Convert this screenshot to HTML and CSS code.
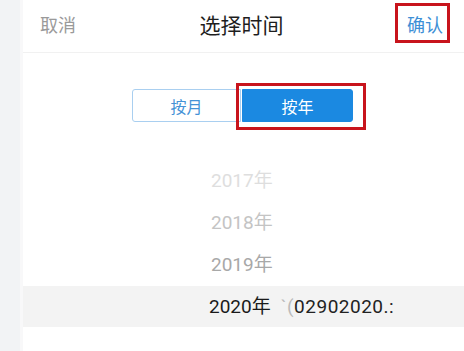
FILE: index.html
```html
<!DOCTYPE html>
<html lang="zh-CN">
<head>
    <meta charset="UTF-8">
    <meta name="viewport" content="width=device-width, initial-scale=1.0">
    <title>选择时间</title>
    <link rel="stylesheet" href="styles.css">
</head>
<body>
    <div class="screen">
        <div class="side"></div>
        <div class="panel">
            <div class="header">
                <span class="cancel">取消</span>
                <span class="title">选择时间</span>
                <span class="confirm marked">确认</span>
            </div>

            <div class="tabs">
                <button class="tab">按月</button>
                <button class="tab active marked">按年</button>
            </div>

            <div class="wheel">
                <div class="row far">2017年</div>
                <div class="row mid">2018年</div>
                <div class="row near">2019年</div>
                <div class="row selected">
                    <span>2020年</span>
                    <span class="noise"><i>`(</i>02902020.:</span>
                </div>
            </div>
        </div>
    </div>
</body>
</html>
```

FILE: styles.css
```css
* {
    box-sizing: border-box;
}
body {
    margin: 0;
    font-family: "Noto Sans CJK SC", "Noto Sans", sans-serif;
    background: #fff;
    color: #222;
}
.screen {
    display: flex;
    width: 464px;
    height: 351px;
    overflow: hidden;
}
.side {
    width: 23px;
    background: #f2f3f5;
    border-right: 3px solid #f8f8f9;
}
.panel {
    flex: 1;
    background: #fff;
}
.header {
    display: grid;
    grid-template-columns: 1fr auto 1fr;
    align-items: center;
    height: 53px;
    padding: 0 21px 4px 17px;
    border-bottom: 1px solid #f1f1f1;
}
.cancel {
    font-size: 18px;
    color: #9a9a9a;
}
.title {
    font-size: 21px;
    color: #1e1e1e;
}
.confirm {
    justify-self: end;
    font-size: 18px;
    color: #3d8fd6;
}
.marked {
    position: relative;
}
.confirm.marked::after {
    content: "";
    position: absolute;
    top: -8px;
    bottom: -6px;
    left: -12px;
    right: -7px;
    border: 3px solid #c8141c;
}
.tabs {
    display: flex;
    justify-content: center;
    margin-top: 36px;
    padding-right: 2px;
}
.tab {
    width: 109px;
    height: 33px;
    font-family: inherit;
    font-size: 16px;
    color: #4592d6;
    background: #fff;
    border: 1px solid #a9cff0;
    border-radius: 3px 0 0 3px;
    padding: 0;
}
.tab.active {
    width: 111px;
    color: #fff;
    background: #1b89e1;
    border-color: #1b89e1;
    border-radius: 0 3px 3px 0;
    margin-left: 1px;
}
.tab.active.marked::after {
    content: "";
    position: absolute;
    top: -7px;
    bottom: -9px;
    left: -7px;
    right: -14px;
    border: 3px solid #c8141c;
}
.wheel {
    margin-top: 38px;
}
.row {
    height: 42px;
    line-height: 42px;
    padding-left: 188px;
    font-family: Roboto, "Noto Sans CJK SC", sans-serif;
    font-size: 19px;
}
.row.far {
    color: #dedede;
}
.row.mid {
    color: #c4c4c4;
}
.row.near {
    color: #a8a8a8;
}
.row.selected {
    display: flex;
    gap: 10px;
    height: 41px;
    line-height: 41px;
    padding-left: 186px;
    background: #f3f3f3;
    color: #1a1a1a;
}
.noise {
    color: #222;
    letter-spacing: 0.5px;
}
.noise i {
    font-style: normal;
    color: #bbb;
}
```
